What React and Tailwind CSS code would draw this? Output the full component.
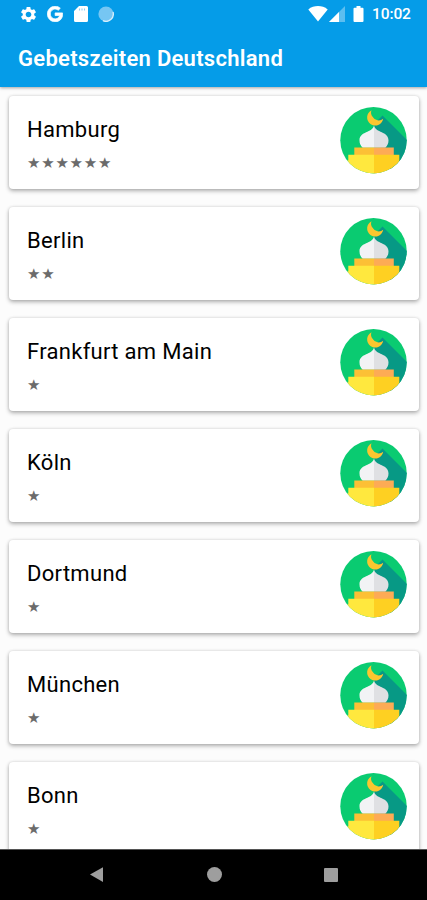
import { FaGoogle } from 'react-icons/fa';
import { MdSettings } from 'react-icons/md';

const cities = [
  { name: 'Hamburg', stars: 6 },
  { name: 'Berlin', stars: 2 },
  { name: 'Frankfurt am Main', stars: 1 },
  { name: 'Köln', stars: 1 },
  { name: 'Dortmund', stars: 1 },
  { name: 'München', stars: 1 },
  { name: 'Bonn', stars: 1 },
];

function StatusBar() {
  return (
    <div className="flex h-7 items-center justify-between pl-[19px] pr-4 text-white">
      <div className="flex items-center">
        <MdSettings className="size-[19px]" />
        <FaGoogle className="ml-[9px] size-4 stroke-white stroke-[24]" />
        <svg className="ml-[11px] h-4 w-[14px]" viewBox="0 0 14 16">
          <path d="M5 0h7.5A1.5 1.5 0 0 1 14 1.5v13a1.5 1.5 0 0 1-1.5 1.5h-11A1.5 1.5 0 0 1 0 14.5V5z" fill="#fff" />
          <path d="M5.5 2.5v2M8 2.5v2M10.5 2.5v2" stroke="#8fd0f5" strokeWidth="1.1" />
        </svg>
        <svg className="ml-[10px] size-4" viewBox="0 0 16 16">
          <circle cx="8" cy="8" r="7.6" fill="#76c6f3" />
          <path d="M15 6a7.3 7.3 0 0 1-10 8.7" fill="none" stroke="#d8effc" strokeWidth="1.3" />
        </svg>
      </div>
      <div className="flex items-center">
        <svg className="h-4 w-5" viewBox="0 0 20 16" fill="currentColor">
          <path d="M.3 3.4C6-1 14-1 19.7 3.4L10 15.4z" />
        </svg>
        <svg className="ml-[1px] size-4" viewBox="0 0 16 16" fill="currentColor">
          <path d="M0 16 16 0v16z" opacity="0.35" />
          <path d="M0 16 10 6v10z" />
        </svg>
        <svg className="ml-[8px] h-4 w-[11px]" viewBox="0 0 11 16" fill="currentColor">
          <path d="M3.5 0h4v1.8h2a1 1 0 0 1 1 1V15a1 1 0 0 1-1 1h-8a1 1 0 0 1-1-1V2.8a1 1 0 0 1 1-1h2z" />
        </svg>
        <span className="ml-[8px] w-[39px] pt-px text-[15.5px] font-medium leading-none tracking-[-0.1px]">10:02</span>
      </div>
    </div>
  );
}

function MosqueIcon() {
  return (
    <svg className="size-[67px] shrink-0" viewBox="0 0 67 67">
      <clipPath id="badge">
        <circle cx="33.5" cy="33.2" r="33.2" />
      </clipPath>
      <g clipPath="url(#badge)">
        <path fill="#0acb71" d="M0 0h67v67H0z" />
        <path fill="#079985" d="M34 17 42.5 8.5 67 33v34H52L36 30z" />
        <path fill="#fbc62f" d="M31.5 3.2a8.1 8.1 0 1 0 11.7 8.6A6.8 6.8 0 0 1 32.8 10a6.6 6.6 0 0 1-1.3-6.800z" />
        <path fill="#f2f3f5" d="M34 18.500C32.500 26 19.500 24 19.500 33.500c0 3 1.200 5.500 3.200 7.200H34z" />
        <path fill="#dfe0e3" d="M34 18.500C35.500 26 48.500 24 48.500 33.500c0 3-1.200 5.500-3.200 7.200H34z" />
        <path fill="#fcc035" d="M14.300 40.500H34v8H14.300z" />
        <path fill="#fdab55" d="M34 40.500h19.800v8H34z" />
        <path fill="#ffe83e" d="M8.300 47.800H34V67H3V53.500h5.300z" />
        <path fill="#fed022" d="M34 47.800h25.300V67H34z" />
      </g>
    </svg>
  );
}

function CityCard({ name, stars }) {
  return (
    <li className="flex h-[93px] shrink-0 justify-between rounded-[4px] bg-white pl-[18px] pr-3 pt-[11px] shadow-[0_2px_4px_rgba(0,0,0,0.3),0_0_3px_rgba(0,0,0,0.12)]">
      <div className="pt-[10px]">
        <h2 className="text-[22px] leading-[26px] tracking-[0.3px] text-black">{name}</h2>
        <p className="mt-[11px] font-['DejaVu_Sans',sans-serif] text-[15px] leading-[18px] tracking-[0.75px] text-[#6b6b6b]">
          {'★'.repeat(stars)}
        </p>
      </div>
      <MosqueIcon />
    </li>
  );
}

function NavBar() {
  return (
    <nav className="flex h-[51px] shrink-0 items-center justify-between border-t border-[#555] bg-black px-[89px]">
      <svg className="size-4" viewBox="0 0 16 16" fill="#9e9e9e">
        <path d="M1 7.5 14 .2V15z" />
      </svg>
      <div className="mb-px size-[15px] rounded-full bg-[#9e9e9e]" />
      <div className="mb-px size-[14px] rounded-[1px] bg-[#9e9e9e]" />
    </nav>
  );
}

export default function App() {
  return (
    <div className="flex h-screen w-full flex-col overflow-hidden bg-[#fcfcfc] font-[Roboto,sans-serif]">
      <header className="relative h-[87px] shrink-0 bg-[#059ce8] shadow-[0_1px_3px_rgba(0,0,0,0.35)]">
        <StatusBar />
        <h1 className="pl-[18px] pt-[17px] text-[22px] font-semibold leading-[28px] tracking-[0.28px] text-white">
          Gebetszeiten Deutschland
        </h1>
      </header>
      <main className="min-h-0 flex-1 overflow-hidden">
        <ul className="flex flex-col gap-[18px] pl-[9px] pr-2 pt-[9px]">
          {cities.map((city) => (
            <CityCard key={city.name} name={city.name} stars={city.stars} />
          ))}
        </ul>
      </main>
      <NavBar />
    </div>
  );
}
